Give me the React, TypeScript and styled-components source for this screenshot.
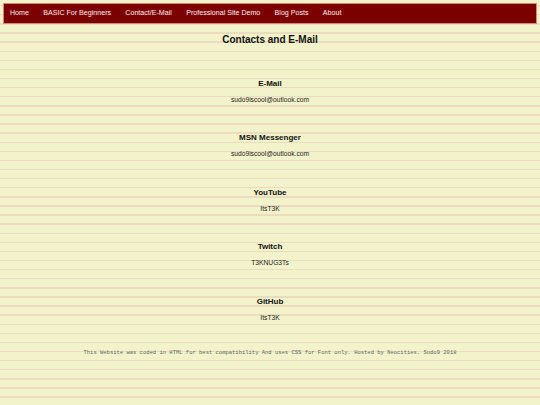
import { createGlobalStyle } from "styled-components";
import styled from "styled-components";

const GlobalStyle = createGlobalStyle`
  html, body {
    margin: 0;
    padding: 0;
  }
  body {
    min-height: 405px;
    background-color: #f3f3cb;
    background-image: repeating-linear-gradient(
      to bottom,
      transparent 0,
      transparent 5px,
      #ebdcc0 5px,
      #ebdcc0 6.4px,
      transparent 6.4px,
      transparent 9.1px
    );
    font-family: "Liberation Sans", Arial, sans-serif;
    color: #111;
  }
`;

const SPage = styled.div`
  padding: 3px;
`;

const SNav = styled.nav`
  display: flex;
  align-items: center;
  height: 19px;
  background: #7d0000;
  border: 1px solid #d08a7a;
  padding: 0 0 0 6px;
`;

const SNavLink = styled.a`
  color: #fbeeee;
  font-size: 7.1px;
  text-decoration: none;
  margin-right: 14.3px;
  line-height: 19px;
`;

const SMain = styled.main`
  display: flex;
  flex-direction: column;
  align-items: center;
`;

const SHeading = styled.h2`
  margin: 10px 0 3px;
  font-size: 10px;
  line-height: 12px;
  font-weight: bold;
`;

const SSection = styled.section`
  display: flex;
  flex-direction: column;
  align-items: center;
  margin-top: 29.6px;
`;

const STitle = styled.h3`
  margin: 0;
  font-size: 8px;
  line-height: 10px;
  font-weight: bold;
`;

const SValue = styled.p`
  margin: 7px 0 0;
  font-size: 6.7px;
  line-height: 8px;
  color: #222;
`;

const SFooter = styled.footer`
  margin-top: 27px;
  font-family: "Liberation Mono", "Courier New", monospace;
  font-size: 5.5px;
  line-height: 7px;
  color: #666;
  text-align: center;
`;

const links = [
  "Home",
  "BASIC For Beginners",
  "Contact/E-Mail",
  "Professional Site Demo",
  "Blog Posts",
  "About",
];

const contacts = [
  { title: "E-Mail", value: "sudo9iscool@outlook.com" },
  { title: "MSN Messenger", value: "sudo9iscool@outlook.com" },
  { title: "YouTube", value: "ItsT3K" },
  { title: "Twitch", value: "T3KNUG3Ts" },
  { title: "GitHub", value: "ItsT3K" },
];

const App = () => {
  return (
    <>
      <GlobalStyle />
      <SPage>
        <SNav>
          {links.map((l) => (
            <SNavLink key={l} href="#">
              {l}
            </SNavLink>
          ))}
        </SNav>
        <SMain>
          <SHeading>Contacts and E-Mail</SHeading>
          {contacts.map((c) => (
            <SSection key={c.title}>
              <STitle>{c.title}</STitle>
              <SValue>{c.value}</SValue>
            </SSection>
          ))}
          <SFooter>
            This Website was coded in HTML for best compatibility And uses CSS
            for Font only. Hosted by Neocities. Sudo9 2018
          </SFooter>
        </SMain>
      </SPage>
    </>
  );
};

export default App;
